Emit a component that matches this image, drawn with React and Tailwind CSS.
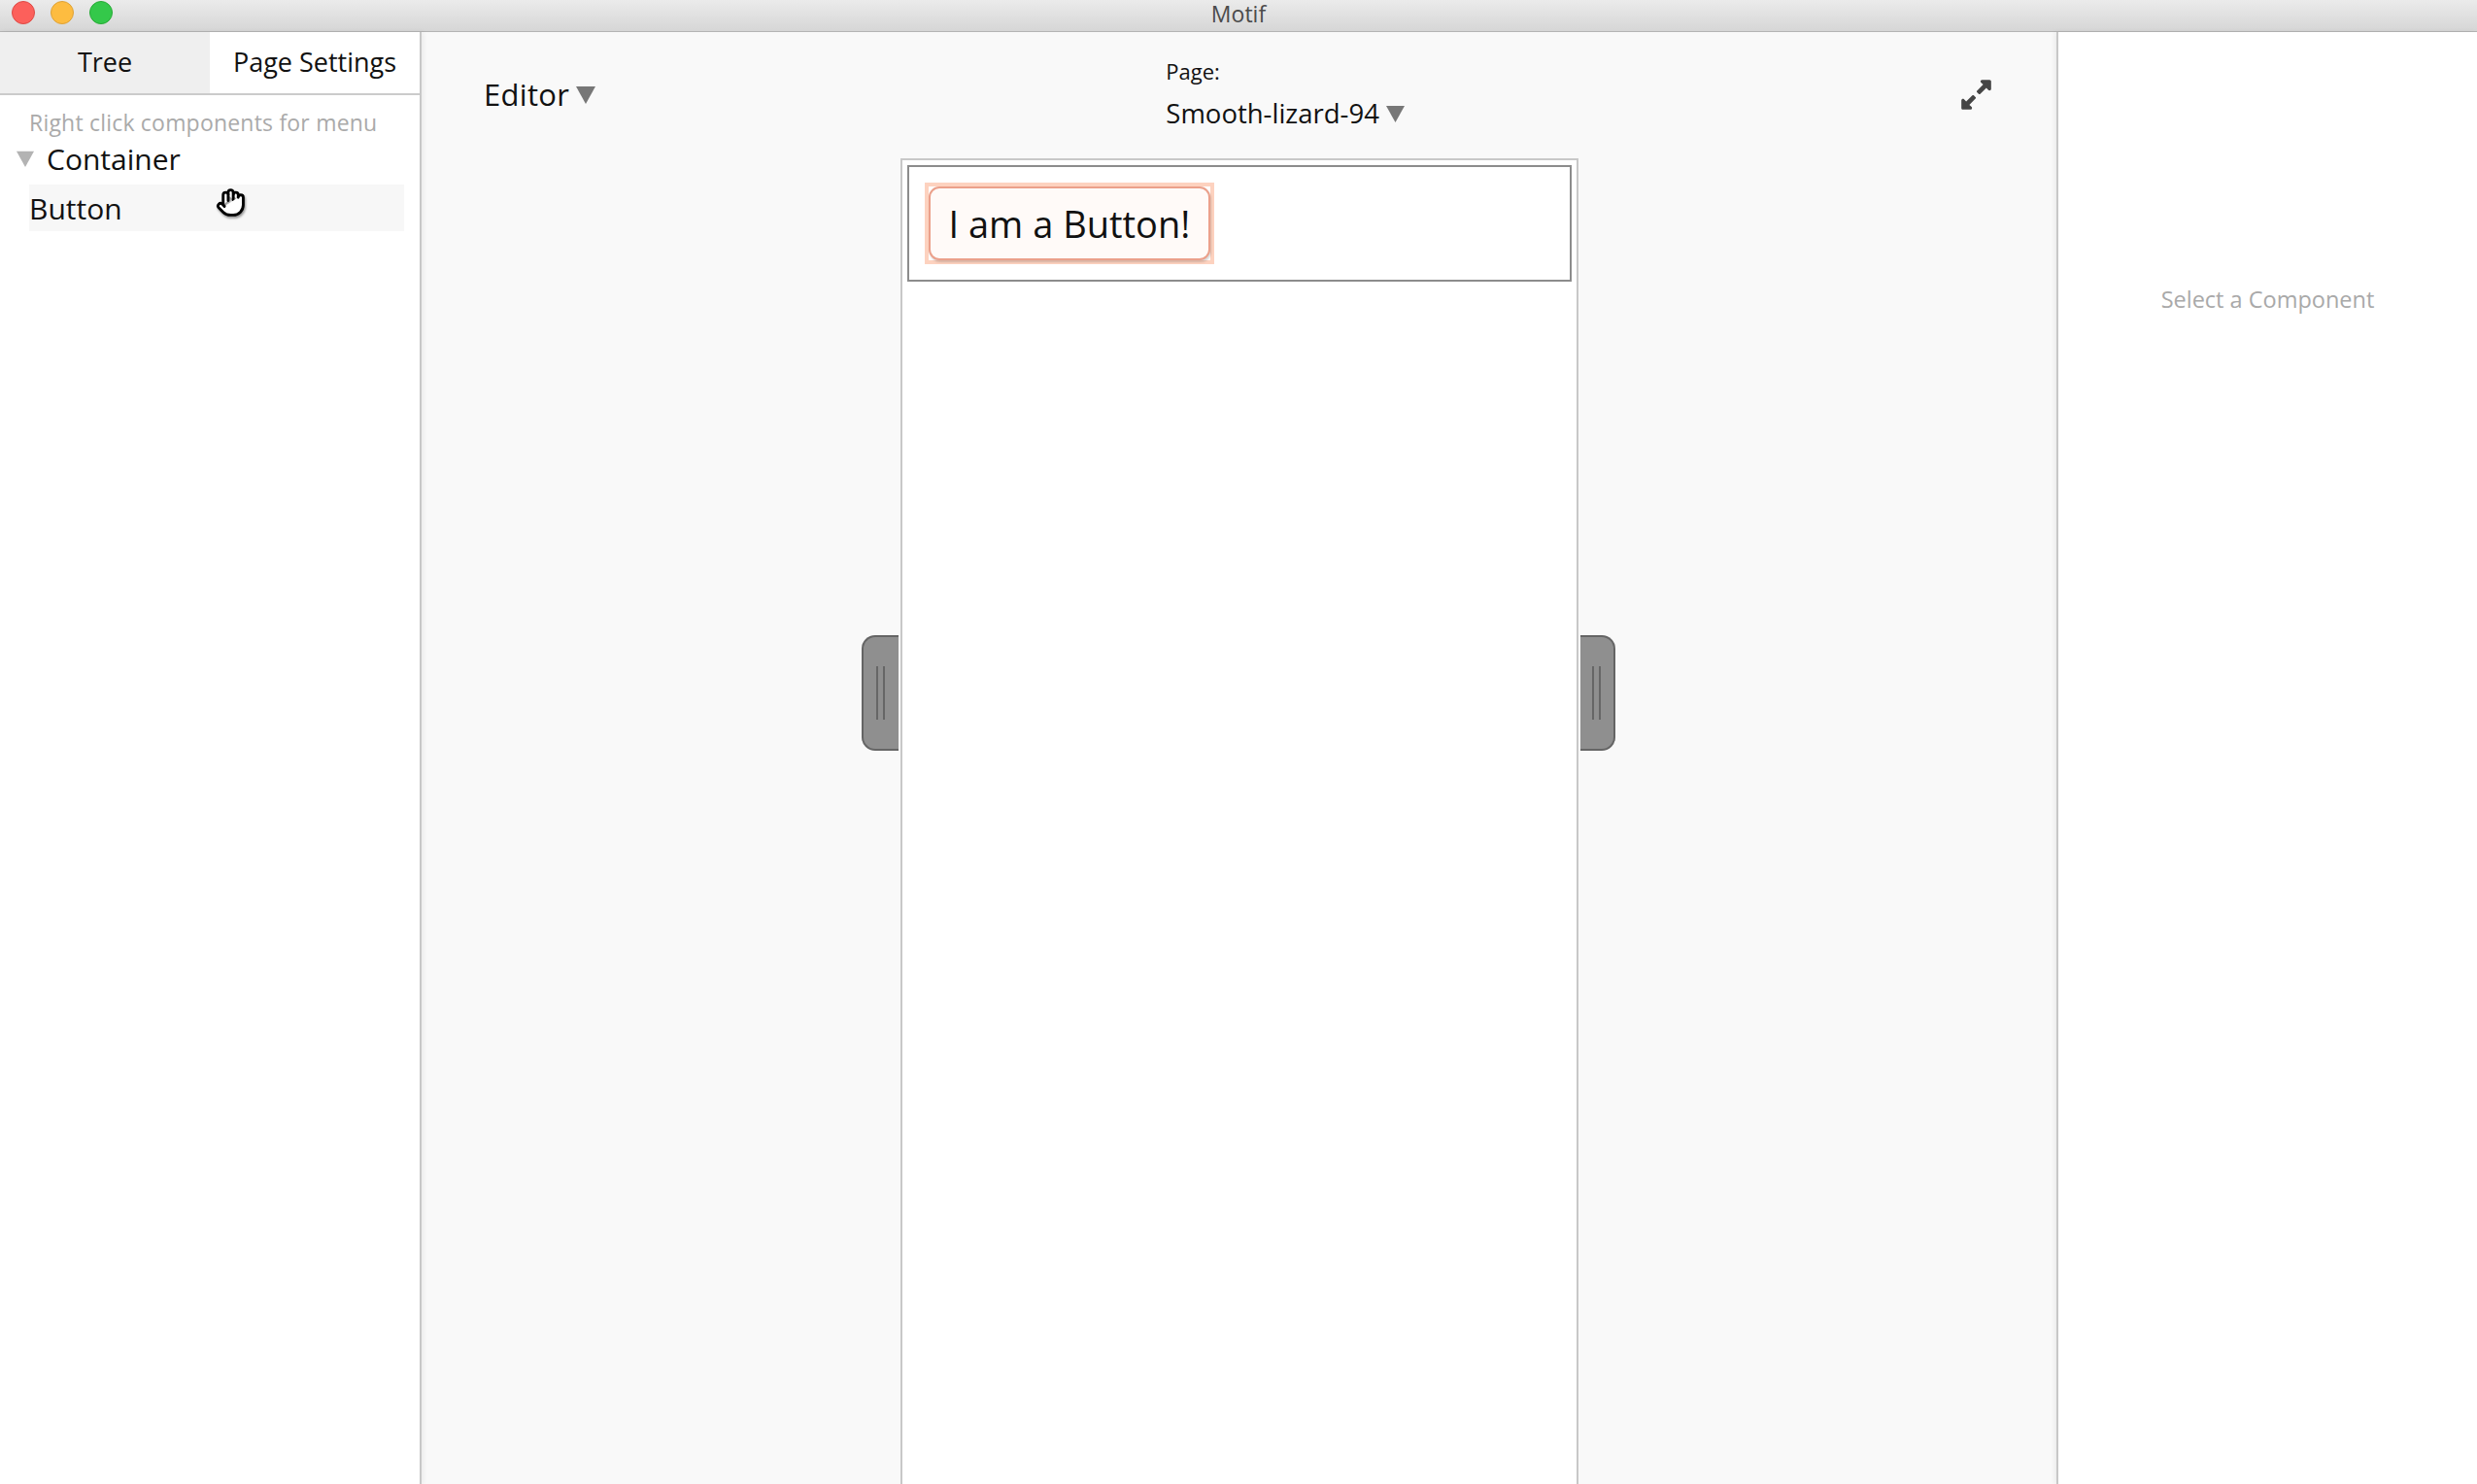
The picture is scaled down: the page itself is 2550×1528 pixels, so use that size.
import { Hand } from "lucide-react";
import { FaExpandAlt } from "react-icons/fa";

const font = { fontFamily: '"Open Sans", "Noto Sans", sans-serif' };

function TitleBar() {
  return (
    <div className="h-[33px] shrink-0 grid grid-cols-[1fr_auto_1fr] bg-gradient-to-b from-[#ebebeb] to-[#d6d6d6] border-b border-[#b4b4b4]">
      <div className="flex items-start gap-4 pl-3 pt-[1px]">
        <div className="w-6 h-6 rounded-full bg-[#fc605b] border border-[#de4a45]" />
        <div className="w-6 h-6 rounded-full bg-[#fdbc40] border border-[#dea236]" />
        <div className="w-6 h-6 rounded-full bg-[#34c84a] border border-[#27aa35]" />
      </div>
      <div className="text-[23px] leading-[29px] text-[#4b4b4b]">Motif</div>
      <div />
    </div>
  );
}

function Triangle({ className }) {
  return (
    <svg viewBox="0 0 10 10" className={className}>
      <path d="M0 1 L10 1 L5 10 Z" fill="currentColor" />
    </svg>
  );
}

function Sidebar() {
  return (
    <div className="w-[434px] shrink-0 bg-white border-r-2 border-[#c8c8c8] relative z-10 shadow-[2px_0_5px_rgba(0,0,0,0.06)] flex flex-col">
      <div className="h-[65px] flex border-b-2 border-[#cbcbcb]">
        <div className="w-[216px] bg-[#efefef] flex items-center justify-center text-[27px] text-[#111]">Tree</div>
        <div className="flex-1 bg-white flex items-center justify-center text-[27px] text-[#111]">Page Settings</div>
      </div>
      <div className="pl-[30px] pt-[14px] text-[23px] leading-[28px] text-[#aaaaaa] tracking-[0.2px]">Right click components for menu</div>
      <div className="flex items-center pl-[17px] h-[36px] mt-[5px]">
        <Triangle className="w-[18px] h-[18px] text-[#b3b3b3] mr-[13px]" />
        <span className="text-[30px] text-[#111]">Container</span>
      </div>
      <div className="relative ml-[30px] mr-[16px] mt-[9px] h-[48px] bg-[#f7f7f7] flex items-center">
        <span className="text-[30px] text-[#111]">Button</span>
        <Hand className="absolute left-[192px] top-[3px] w-[31px] h-[31px] text-black drop-shadow-[1px_2px_1px_rgba(0,0,0,0.4)]" fill="white" strokeWidth={2.2} />
      </div>
    </div>
  );
}

function Handle({ side }) {
  const shape = side === "left"
    ? "-left-[42px] w-[38px] rounded-l-[14px] border-r-0"
    : "-right-[40px] w-[36px] rounded-r-[14px] border-l-0";
  return (
    <div className={`absolute top-[489px] h-[119px] bg-[#8f8f8f] border-2 border-[#656565] flex items-center justify-center gap-[5px] ${shape}`}>
      <div className="w-[2px] h-[55px] bg-[#666]" />
      <div className="w-[2px] h-[55px] bg-[#666]" />
    </div>
  );
}

function Editor() {
  return (
    <div className="flex-1 bg-[#f9f9f9] flex flex-col min-w-0">
      <div className="h-[130px] shrink-0 flex items-center justify-between pl-[64px] pr-[65px]">
        <div className="flex items-center gap-[7px] -mt-[2px]">
          <span className="text-[31px] text-[#111] tracking-[0.3px]">Editor</span>
          <Triangle className="w-[20px] h-[20px] text-[#777]" />
        </div>
        <div className="flex flex-col -mt-[4px] pl-[16px]">
          <span className="text-[22px] leading-[28px] text-[#111]">Page:</span>
          <div className="flex items-center gap-[7px] mt-[13px]">
            <span className="text-[27.5px] leading-[33px] text-[#111]">Smooth-lizard-94</span>
            <Triangle className="w-[19px] h-[19px] text-[#777]" />
          </div>
        </div>
        <FaExpandAlt className="w-[35px] h-[35px] text-[#454545] -mt-[2px]" />
      </div>
      <div className="flex-1 flex justify-center">
        <div className="relative w-[698px] bg-white border-2 border-b-0 border-[#c8c8c8] p-[5px]">
          <Handle side="left" />
          <Handle side="right" />
          <div className="border-2 border-[#8c8c8c] p-[16px] flex">
            <div className="border-4 border-[#fdd2bf]">
              <button className="h-[76px] px-[19px] rounded-[11px] border-2 border-[#eba08b] bg-[#fffaf8] shadow-[1px_2px_2px_rgba(0,0,0,0.15)] text-[38px] text-[#111] leading-none" style={font}>
                I am a Button!
              </button>
            </div>
          </div>
        </div>
      </div>
    </div>
  );
}

function Inspector() {
  return (
    <div className="w-[433px] shrink-0 bg-white border-l-2 border-[#c8c8c8] relative z-10 shadow-[-2px_0_5px_rgba(0,0,0,0.06)] flex justify-center pt-[259px]">
      <span className="text-[23.5px] leading-[32px] text-[#a9a9a9]">Select a Component</span>
    </div>
  );
}

export default function App() {
  return (
    <div className="w-[2550px] h-[1528px] flex flex-col overflow-hidden bg-white" style={font}>
      <TitleBar />
      <div className="flex-1 flex min-h-0">
        <Sidebar />
        <Editor />
        <Inspector />
      </div>
    </div>
  );
}
